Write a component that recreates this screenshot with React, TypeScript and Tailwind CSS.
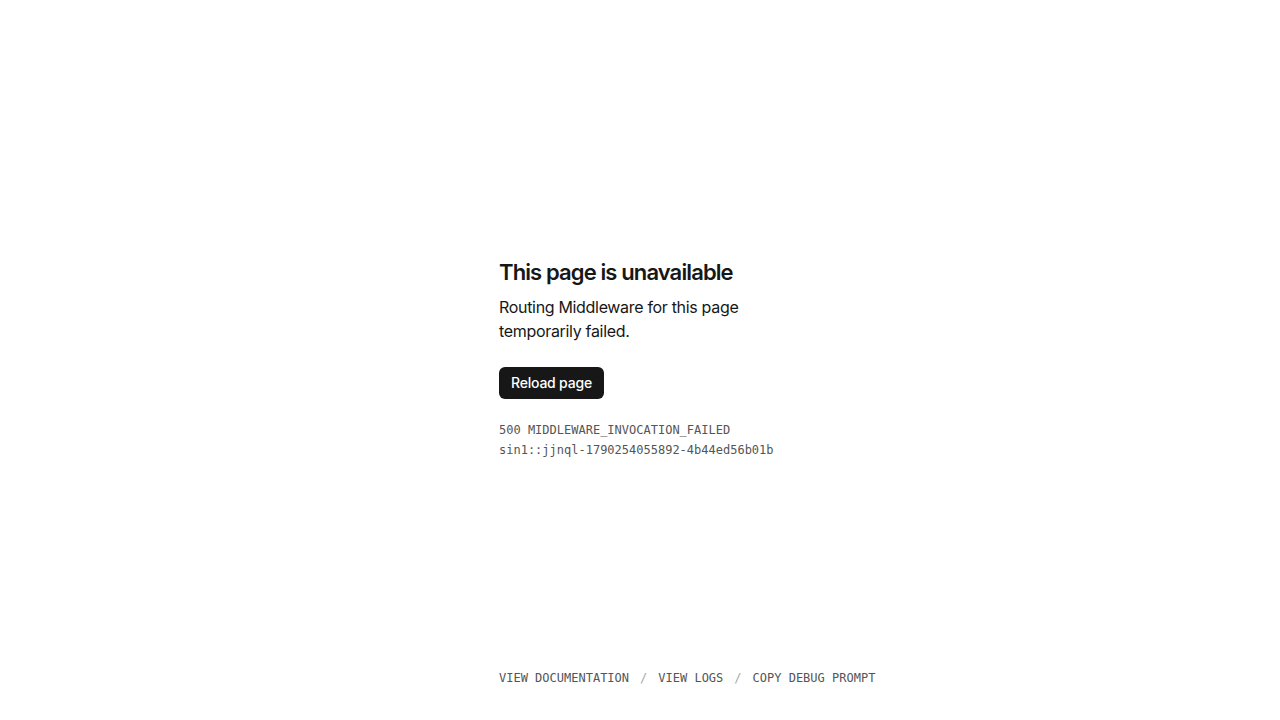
export default function App() {
  return (
    <div className="flex h-screen flex-col bg-white text-[#171717]" style={{ fontFamily: 'Inter, "Noto Sans", sans-serif' }}>
      <div className="flex-1" />
      <main className="mx-auto w-[282px] pb-[2px]">
        <h1 className="text-[22px] font-semibold leading-7 tracking-[-0.04em]">This page is unavailable</h1>
        <p className="mt-[9px] text-base leading-6 tracking-[-0.02em] text-[#171717]">Routing Middleware for this page temporarily failed.</p>
        <button className="mt-6 h-8 rounded-md bg-[#171717] px-3 text-sm font-medium tracking-[-0.015em] text-white">Reload page</button>
        <div className="mt-[21px] whitespace-nowrap text-xs leading-5 text-[#555555]" style={{ fontFamily: '"DejaVu Sans Mono", monospace' }}>
          <div>500 MIDDLEWARE_INVOCATION_FAILED</div>
          <div>sin1::jjnql-1790254055892-4b44ed56b01b</div>
        </div>
      </main>
      <div className="flex flex-1 items-end">
        <footer className="mx-auto w-[282px] whitespace-nowrap pb-8 text-xs leading-5 text-[#555555]" style={{ fontFamily: '"DejaVu Sans Mono", monospace' }}>
          <span>VIEW DOCUMENTATION</span>
          <span className="mx-[11px] text-[#a8a8a8]">/</span>
          <span>VIEW LOGS</span>
          <span className="mx-[11px] text-[#a8a8a8]">/</span>
          <span>COPY DEBUG PROMPT</span>
        </footer>
      </div>
    </div>
  );
}
